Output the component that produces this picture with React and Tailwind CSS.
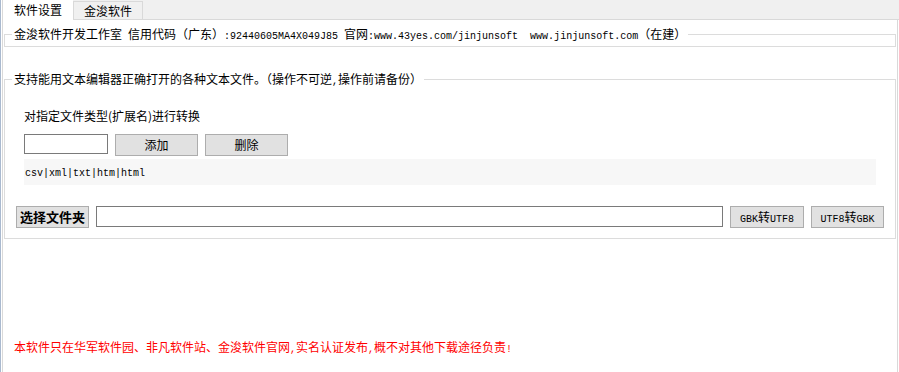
import React from "react";

function Mixed({ text, asciiClass }) {
  const parts = text.split(/([\x20-\x7E]+)/).filter((p) => p.length > 0);
  return (
    <>
      {parts.map((p, i) =>
        /^[\x20-\x7E]+$/.test(p) ? (
          <span key={i} className={asciiClass}>
            {p}
          </span>
        ) : (
          <span key={i}>{p}</span>
        )
      )}
    </>
  );
}

const MONO10 = "font-['Liberation_Mono',monospace] text-[10px] leading-none";

function Btn({ children, className }) {
  return (
    <div
      className={
        "flex items-center justify-center border border-[#adadad] bg-[#e1e1e1] text-[12px] leading-[14px] text-black " +
        className
      }
    >
      {children}
    </div>
  );
}

export default function App() {
  return (
    <div className="w-[899px] h-[372px] bg-white overflow-hidden flex font-['Noto_Sans_CJK_SC',sans-serif] text-[12px] leading-[14px] text-black">
      <div className="w-px bg-[#a9b9cf]" />
      <div className="w-px bg-white" />
      <div className="flex-1 flex flex-col">
        {/* Tab strip */}
        <div className="h-[20px] flex items-end bg-[#f0f0f0] border-b border-[#d9d9d9]">
          <div className="h-[20px] -mb-px w-[71px] bg-white border-l border-[#d9d9d9] flex items-center justify-center pb-[1px]">
            软件设置
          </div>
          <div className="h-[18px] w-[70px] bg-[#f0f0f0] border border-b-0 border-[#d9d9d9] flex items-center justify-center">
            金浚软件
          </div>
        </div>

        {/* Panel */}
        <div className="flex-1 mr-px border-l border-r border-[#d9d9d9] px-px flex flex-col">
          {/* Groupbox 1 */}
          <fieldset className="mt-[7px] border border-[#dcdcdc]">
            <legend className="ml-[7px] px-[2px] h-[14px] whitespace-pre leading-[14px]">
              <Mixed
                text="金浚软件开发工作室 信用代码（广东）:92440605MA4X049J85 官网:www.43yes.com/jinjunsoft  www.jinjunsoft.com（在建）"
                asciiClass={MONO10}
              />
            </legend>
            <div className="h-[5px]" />
          </fieldset>

          {/* Groupbox 2 */}
          <fieldset className="mt-[25px] border border-[#dcdcdc] pb-[10px]">
            <legend className="ml-[7px] px-[2px] h-[14px] whitespace-pre leading-[14px]">
              <Mixed
                text="支持能用文本编辑器正确打开的各种文本文件。（操作不可逆,操作前请备份）"
                asciiClass={MONO10}
              />
            </legend>
            <div className="pl-[19px] pt-[23px] leading-[14px] h-[37px]">
              对指定文件类型(扩展名)进行转换
            </div>
            <div className="mt-[11px] pl-[19px] flex items-start">
              <input
                readOnly
                className="w-[84px] h-[20px] border border-[#7a7a7a] bg-white outline-none"
              />
              <Btn className="ml-[7px] w-[83px] h-[22px]">添加</Btn>
              <Btn className="ml-[7px] w-[83px] h-[22px]">删除</Btn>
            </div>
            <div className="mt-[3px] ml-[19px] w-[852px] h-[26px] bg-[#f7f7f7] flex items-center pl-[1px] pt-[3px]">
              <span className={MONO10}>csv|xml|txt|htm|html</span>
            </div>
            <div className="mt-[21px] pl-[11px] flex items-start">
              <Btn className="w-[73px] h-[22px] font-bold text-[13px]">选择文件夹</Btn>
              <input
                readOnly
                className="ml-[7px] w-[627px] h-[21px] border border-[#7a7a7a] bg-white outline-none"
              />
              <Btn className="ml-[7px] w-[74px] h-[22px]">
                <span className="whitespace-pre">
                  <Mixed text="GBK转UTF8" asciiClass={MONO10} />
                </span>
              </Btn>
              <Btn className="ml-[7px] w-[73px] h-[22px]">
                <span className="whitespace-pre">
                  <Mixed text="UTF8转GBK" asciiClass={MONO10} />
                </span>
              </Btn>
            </div>
          </fieldset>

          <div className="mt-[101px] pl-[10px] text-[#ff0000] leading-[14px] h-[14px] whitespace-pre">
            <Mixed
              text="本软件只在华军软件园、非凡软件站、金浚软件官网,实名认证发布,概不对其他下载途径负责!"
              asciiClass={MONO10}
            />
          </div>
        </div>
      </div>
    </div>
  );
}
